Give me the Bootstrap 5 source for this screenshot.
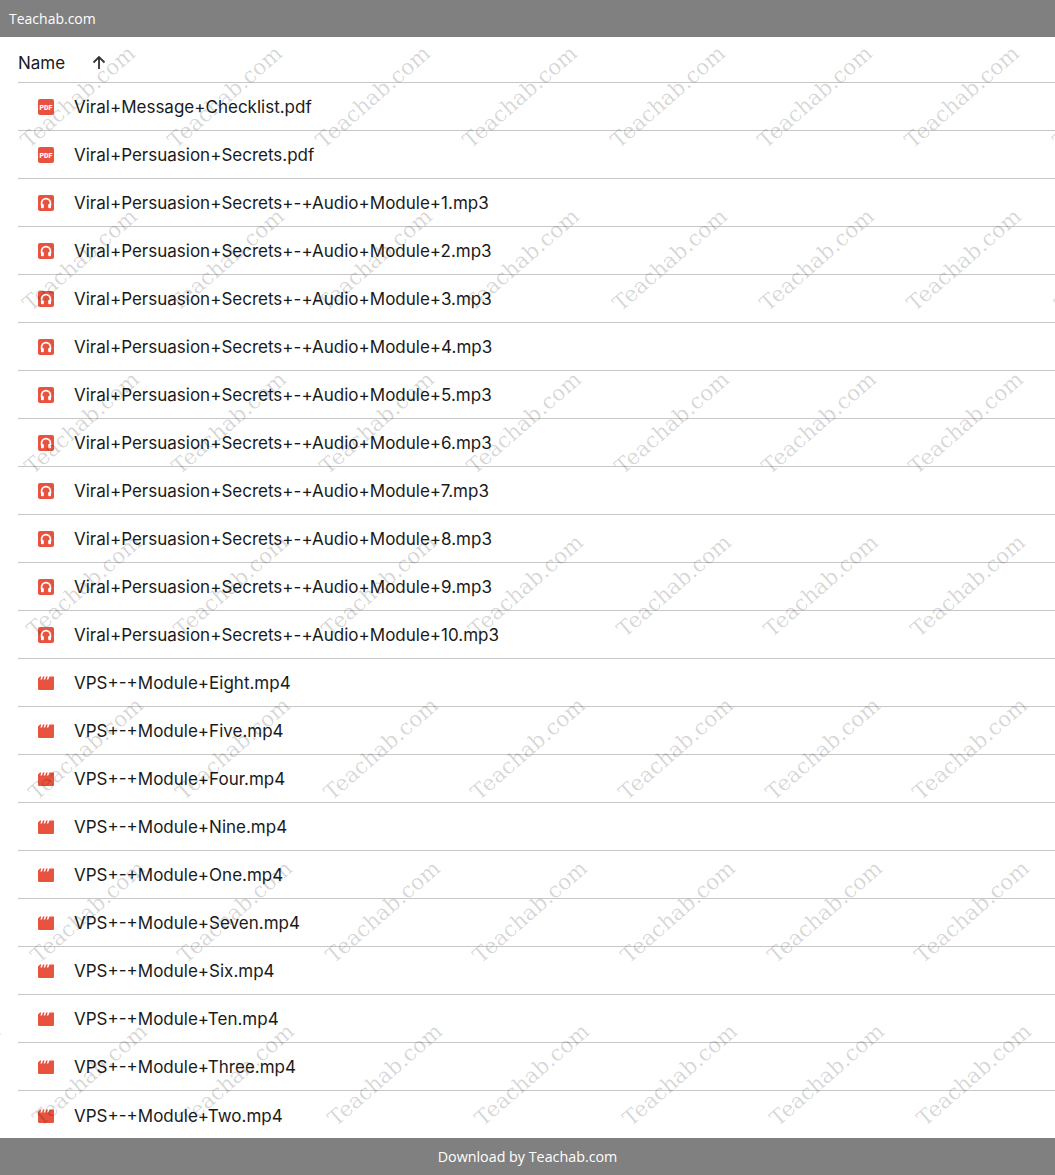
<!DOCTYPE html>
<html lang="en">
<head>
    <meta charset="UTF-8">
    <meta name="viewport" content="width=device-width, initial-scale=1.0">
    <title>Teachab.com</title>
    <link href="https://cdn.jsdelivr.net/npm/bootstrap@5.3.2/dist/css/bootstrap.min.css" rel="stylesheet">
    <style>
        html, body { height: 100%; overflow: hidden; }
        body { background: #fff; color: #1a1a1a; font-family: Inter, Roboto, "Liberation Sans", sans-serif; }
        .page-shell { height: 1175px; }
        .strip { height: 37px; background: #808080; color: #fff; font-family: "Open Sans", "Liberation Sans", sans-serif; font-size: 14px; }
        .strip-top { padding-left: 9px; }
        .strip-bottom { font-size: 14.3px; }
        .file-area { height: 1101px; overflow: hidden; padding-left: 18px; }
        .head-row { height: 46px; flex: none; padding-top: 7px; font-size: 17px; border-bottom: 1px solid #c7c7c7; }
        .head-label { margin-top: 2px; }
        .sort-arrow { margin-left: 26px; }
        .file-row { height: 48px; flex: none; padding-top: 1px; font-size: 17px; border-bottom: 1px solid #c7c7c7; padding-left: 20px; }
        .file-row:last-child { border-bottom: 0; }
        .file-name { margin-top: 2px; }
        .file-ico { width: 16px; height: 16px; flex: none; margin-right: 20px; }
        .wm-layer { inset: 0; pointer-events: none; overflow: hidden; }
        .wm-text { position: absolute; font-family: "DejaVu Serif", serif; font-size: 21.5px; line-height: 24px; color: rgba(0, 0, 0, .16); white-space: nowrap; transform: rotate(-41deg); transform-origin: left bottom; }
    </style>
</head>

<body>
    <svg width="0" height="0" class="position-absolute">
        <symbol id="ico-pdf" viewBox="0 0 16 16">
            <rect width="16" height="16" rx="2" fill="#e8533f"/>
            <text x="8" y="10.600" text-anchor="middle" font-family="Roboto, sans-serif" font-weight="900" font-size="7" fill="#fff">PDF</text>
        </symbol>
        <symbol id="ico-audio" viewBox="0 0 16 16">
            <rect width="16" height="16" rx="2" fill="#e8533f"/>
            <path d="M3.600 10.200V8a4.400 4.400 0 0 1 8.800 0v2.200" fill="none" stroke="#fff" stroke-width="1.700"/>
            <rect x="3" y="9" width="2.800" height="4.200" rx=".8" fill="#fff"/>
            <rect x="10.200" y="9" width="2.800" height="4.200" rx=".8" fill="#fff"/>
        </symbol>
        <symbol id="ico-video" viewBox="0 0 16 16">
            <path d="M0 3.500 2 1.500h1.400L2.400 4.600h1.500L5 1.500h1.600L5.600 4.600h1.500L8.200 1.500h1.600L8.800 4.600h1.500L11.400 1.500H16v12.200a1.300 1.300 0 0 1-1.300 1.300H1.300A1.300 1.300 0 0 1 0 13.700z" fill="#e8533f"/>
        </symbol>
    </svg>

    <div class="page-shell d-flex flex-column position-relative">
        <div class="strip strip-top d-flex align-items-center">Teachab.com</div>

        <div class="file-area flex-grow-1 d-flex flex-column">
            <div class="head-row d-flex align-items-center">
                <span class="head-label">Name</span>
                <svg class="sort-arrow" width="16" height="16" viewBox="0 0 16 16"><path d="M8 14V3M2.500 7.500 8 2 13.500 7.500" fill="none" stroke="#333" stroke-width="1.800"/></svg>
            </div>
            <div id="fileList" class="d-flex flex-column"></div>
        </div>

        <div class="strip strip-bottom d-flex align-items-center justify-content-center">Download by Teachab.com</div>

        <div id="wmLayer" class="wm-layer position-absolute"></div>
    </div>

    <script src="https://cdn.jsdelivr.net/npm/bootstrap@5.3.2/dist/js/bootstrap.bundle.min.js"></script>
    <script>
        const files = ["Viral+Message+Checklist.pdf", "Viral+Persuasion+Secrets.pdf"];
        for (let i = 1; i <= 10; i++) files.push(`Viral+Persuasion+Secrets+-+Audio+Module+${i}.mp3`);
        ["Eight", "Five", "Four", "Nine", "One", "Seven", "Six", "Ten", "Three", "Two"].forEach((n) => files.push(`VPS+-+Module+${n}.mp4`));

        document.getElementById("fileList").innerHTML = files.map((name) => {
            const ext = name.split(".").pop();
            const ico = ext === "pdf" ? "ico-pdf" : ext === "mp3" ? "ico-audio" : "ico-video";
            return `<div class="file-row d-flex align-items-center"><svg class="file-ico"><use href="#${ico}"/></svg><span class="file-name">${name}</span></div>`;
        }).join("");

        // watermark grid, every row sits 2px further right
        let marks = "";
        for (let r = 0; r < 7; r++) {
            for (let c = -1; c < 8; c++) {
                const left = 32 + r * 2 + c * 147.4;
                const top = 129 + r * 163;
                marks += `<span class="wm-text" style="left:${left}px;top:${top}px">Teachab.com</span>`;
            }
        }
        document.getElementById("wmLayer").innerHTML = marks;
    </script>
</body>
</html>
